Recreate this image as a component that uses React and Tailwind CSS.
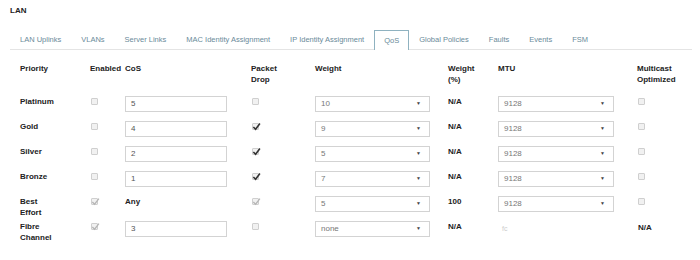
import React from "react";

const tabs = [
  "LAN Uplinks",
  "VLANs",
  "Server Links",
  "MAC Identity Assignment",
  "IP Identity Assignment",
  "QoS",
  "Global Policies",
  "Faults",
  "Events",
  "FSM",
];

const rows = [
  { name: ["Platinum"], enabled: false, cos: "5", drop: "off", weight: "10", pct: "N/A", mtu: "9128", multi: "box" },
  { name: ["Gold"], enabled: false, cos: "4", drop: "on", weight: "9", pct: "N/A", mtu: "9128", multi: "box" },
  { name: ["Silver"], enabled: false, cos: "2", drop: "on", weight: "5", pct: "N/A", mtu: "9128", multi: "box" },
  { name: ["Bronze"], enabled: false, cos: "1", drop: "on", weight: "7", pct: "N/A", mtu: "9128", multi: "box" },
  { name: ["Best", "Effort"], enabled: true, cos: null, drop: "dim", weight: "5", pct: "100", mtu: "9128", multi: "box" },
  { name: ["Fibre", "Channel"], enabled: true, cos: "3", drop: "off", weight: "none", pct: "N/A", mtu: null, multi: "na" },
];

// small checkbox, light grey like the disabled browser default
const Check = ({ state }) => (
  <span className="relative mt-[1px] inline-block h-[7px] w-[7px] rounded-[1px] border border-[#cfcfcf] bg-[#f1f1f1]">
    {state === "on" && (
      <svg viewBox="0 0 10 10" className="absolute -left-[1px] -top-[2px] h-[9px] w-[9px]">
        <path d="M1.5 5.5 L4 8 L8.8 1.8" fill="none" stroke="#333" strokeWidth="1.8" />
      </svg>
    )}
    {state === "dim" && (
      <svg viewBox="0 0 10 10" className="absolute -left-[1px] -top-[2px] h-[9px] w-[9px]">
        <path d="M1.5 5.5 L4 8 L8.8 1.8" fill="none" stroke="#b5b5b5" strokeWidth="1.4" />
      </svg>
    )}
  </span>
);

const Select = ({ value, width }) => (
  <div className={`flex h-[16px] ${width} items-center justify-between border border-[#d3d3d3] bg-white pl-[5px] pr-[8px] text-[8px] text-[#777]`}>
    <span>{value}</span>
    <span className="text-[5px] text-[#444]">▼</span>
  </div>
);

const Bold = ({ children }) => (
  <span className="pt-[1px] text-[8px] font-bold leading-[10px] text-[#222]">{children}</span>
);

export default function App() {
  return (
    <div className="h-[260px] w-[700px] bg-white font-['Liberation_Sans',Arial,sans-serif]">
      <div className="pl-[10px] pt-[6px] text-[8px] font-bold leading-[9px] text-[#222]">LAN</div>

      {/* tabs */}
      <div className="ml-[10px] mr-[8px] mt-[15px] flex border-b border-[#e4e4e4]">
        {tabs.map((t) => (
          <div
            key={t}
            className={`-mb-px flex h-[20px] items-center px-[9px] text-[7.5px] text-[#6a8b9a] ${
              t === "QoS" ? "border-x border-t border-[#8fb2c0] bg-white" : "border border-transparent"
            }`}
          >
            {t}
          </div>
        ))}
      </div>

      {/* table */}
      <div className="mt-[13px] grid grid-cols-[70px_35px_126px_64px_133px_50px_139px_1fr] pl-[20px] text-[8px]">
        {[
          ["Priority"],
          ["Enabled"],
          ["CoS"],
          ["Packet", "Drop"],
          ["Weight"],
          ["Weight", "(%)"],
          ["MTU"],
          ["Multicast", "Optimized"],
        ].map((h, i) => (
          <div key={i} className="h-[33px] font-bold leading-[11px] text-[#222]">
            {h.map((l) => (
              <div key={l}>{l}</div>
            ))}
          </div>
        ))}

        {rows.map((r, i) => (
          <React.Fragment key={i}>
            <div className="flex h-[25px] flex-col">
              <Bold>{r.name[0]}</Bold>
              {r.name[1] && <Bold>{r.name[1]}</Bold>}
            </div>
            <div className="pl-[1px] pt-[1px]">
              <Check state={r.enabled ? "dim" : "off"} />
            </div>
            <div>
              {r.cos ? (
                <div className="flex h-[16px] w-[102px] items-center border border-[#d3d3d3] pl-[5px] text-[8px] text-[#555]">
                  {r.cos}
                </div>
              ) : (
                <Bold>Any</Bold>
              )}
            </div>
            <div className="pl-[1px] pt-[1px]">
              <Check state={r.drop} />
            </div>
            <div>
              <Select value={r.weight} width="w-[115px]" />
            </div>
            <div>
              <Bold>{r.pct}</Bold>
            </div>
            <div>
              {r.mtu ? (
                <Select value={r.mtu} width="w-[116px]" />
              ) : (
                <span className="pl-[4px] pt-[4px] text-[7px] leading-[16px] text-[#ccc]">fc</span>
              )}
            </div>
            <div className="pl-[1px] pt-[1px]">
              {r.multi === "na" ? <Bold>N/A</Bold> : <Check state="off" />}
            </div>
          </React.Fragment>
        ))}
      </div>
    </div>
  );
}
